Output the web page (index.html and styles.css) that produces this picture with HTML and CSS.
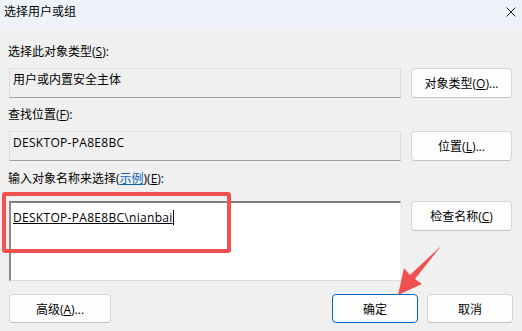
FILE: index.html
```html
<!DOCTYPE html>
<html lang="zh-CN">

<head>
    <meta charset="UTF-8">
    <meta name="viewport" content="width=device-width, initial-scale=1.0">
    <title>选择用户或组</title>
    <link rel="stylesheet" href="styles.css">
</head>

<body>
    <div class="dialog">
        <div class="titlebar">
            <span class="title">选择用户或组</span>
            <svg class="close" width="10" height="10" viewBox="0 0 10 10">
                <path d="M0.5 0.5 L9.5 9.5 M9.5 0.5 L0.5 9.5" stroke="#1a1a1a" stroke-width="1" fill="none" />
            </svg>
        </div>

        <div class="content">
            <div class="label">选择此对象类型(<u>S</u>):</div>
            <div class="row">
                <div class="field">用户或内置安全主体</div>
                <button class="btn">对象类型(<u>O</u>)...</button>
            </div>

            <div class="label">查找位置(<u>F</u>):</div>
            <div class="row">
                <div class="field latin">DESKTOP-PA8E8BC</div>
                <button class="btn">位置(<u>L</u>)...</button>
            </div>

            <div class="label label-last">输入对象名称来选择(<a href="#" class="link">示例</a>)(<u>E</u>):</div>
            <div class="row">
                <div class="names"><span class="name-text latin">DESKTOP-PA8E8BC\nianbai</span><span class="caret"></span></div>
                <button class="btn">检查名称(<u>C</u>)</button>
            </div>
        </div>

        <div class="footer">
            <button class="btn btn-wide">高级(<u>A</u>)...</button>
            <div class="footer-right">
                <button class="btn btn-wide btn-default">确定</button>
                <button class="btn btn-wide">取消</button>
            </div>
        </div>

        <!-- annotation overlay -->
        <svg class="marks" width="522" height="331" viewBox="0 0 522 331">
            <rect x="4" y="194" width="225" height="57" rx="1" fill="none" stroke="#f05050" stroke-width="4" />
            <polygon points="398,295 404,268 410,275 441,246 415,279 422,284" fill="#f05050" />
        </svg>
    </div>
</body>

</html>
```

FILE: styles.css
```css
html,
body {
    margin: 0;
    padding: 0;
    background: #f0f0f0;
    overflow: hidden;
}
* {
    box-sizing: border-box;
}
.dialog {
    position: relative;
    width: 522px;
    height: 331px;
    font-family: "Open Sans", "Noto Sans CJK SC", sans-serif;
    font-size: 12px;
    color: #000;
}
u {
    text-decoration: underline;
    text-underline-offset: 1px;
}
.latin {
    letter-spacing: 0.3px;
}

/* title bar */
.titlebar {
    height: 27px;
    background: #eef3fa;
    display: flex;
    align-items: center;
    justify-content: space-between;
    padding: 0 6px 3px 4px;
}
.title {
    font-size: 12px;
    line-height: 16px;
}
.close {
    display: block;
}

/* body */
.content {
    padding: 17px 10px 0 9px;
}
.label {
    height: 16px;
    line-height: 16px;
    margin: 0 0 8px -1px;
}
.row + .label {
    margin-top: 9px;
}
.label.label-last {
    margin-top: 10px;
    margin-bottom: 14px;
}
.link {
    color: #0a64b4;
    text-decoration: underline;
}
.row {
    display: grid;
    grid-template-columns: 392px 101px;
    column-gap: 10px;
    align-items: start;
}
.field {
    height: 30px;
    padding: 3px 3px 0 3px;
    line-height: 16px;
    background: #f0f0f0;
    border: 1px solid #dedede;
    border-bottom-color: #a0a0a0;
}
.names {
    height: 80px;
    padding: 7px 3px 0 2px;
    line-height: 16px;
    background: #fff;
    border-top: 2px solid #7e7e7e;
    border-left: 2px solid #8a8a8a;
    border-right: 1px solid #f0f0f0;
    border-bottom: 1px solid #dcdcdc;
}
.name-text {
    text-decoration: underline;
    text-underline-offset: 1px;
}
.caret {
    display: inline-block;
    width: 1px;
    height: 15px;
    background: #000;
    vertical-align: -3px;
}

/* buttons */
.btn {
    height: 30px;
    margin: 0;
    padding: 0;
    font-family: inherit;
    font-size: 12px;
    color: #000;
    background: #fdfdfd;
    border: 1px solid #d5d5d5;
    border-bottom-color: #c2c2c2;
    border-radius: 4px;
}
.btn-wide {
    width: 102px;
    height: 29px;
}
.footer {
    display: flex;
    justify-content: space-between;
    padding: 13px 9px 0 9px;
}
.footer-right {
    display: flex;
    gap: 9px;
}
.footer-right .btn-wide {
    width: 86px;
}
.btn-default {
    border: 1px solid #0067c0;
}

.marks {
    position: absolute;
    top: 0;
    left: 0;
    pointer-events: none;
}
```
